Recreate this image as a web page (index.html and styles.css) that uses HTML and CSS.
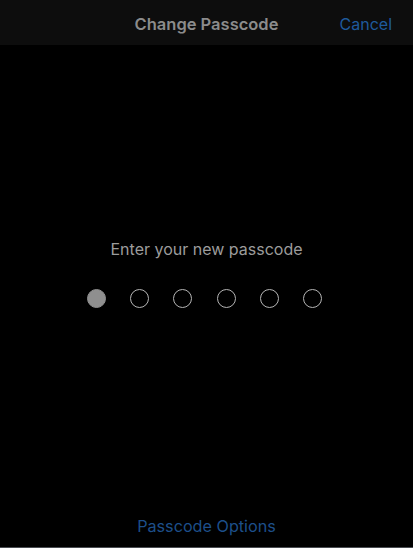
FILE: index.html
```html
<!DOCTYPE html>
<html lang="en">
<head>
  <meta charset="UTF-8">
  <title>Change Passcode</title>
  <link rel="stylesheet" href="styles.css">
</head>
<body>
  <div class="screen">
    <header class="nav-bar">
      <div class="nav-title">Change Passcode</div>
      <a class="nav-cancel" href="#">Cancel</a>
    </header>

    <main class="passcode">
      <div class="prompt">Enter your new passcode</div>
      <div class="dots">
        <span class="dot filled"></span>
        <span class="dot"></span>
        <span class="dot"></span>
        <span class="dot"></span>
        <span class="dot"></span>
        <span class="dot"></span>
      </div>
    </main>

    <footer class="options">
      <a class="options-link" href="#">Passcode Options</a>
    </footer>
  </div>
</body>
</html>
```

FILE: styles.css
```css
* { box-sizing: border-box; margin: 0; padding: 0; }
body {
  background: #000;
  font-family: Inter, "Liberation Sans", sans-serif;
}
a { text-decoration: none; }
.screen {
  display: flex;
  flex-direction: column;
  height: 548px;
  width: 413px;
  background: #000;
}
.nav-bar {
  position: relative;
  height: 45px;
  padding-top: 2px;
  background: #0d0d0d;
  display: flex;
  align-items: center;
  justify-content: center;
}
.nav-title {
  color: #8b8b8b;
  font-size: 16.5px;
  font-weight: 600;
}
.nav-cancel {
  position: absolute;
  right: 21px;
  top: 13px;
  color: #1f5a9c;
  font-size: 16px;
  line-height: 22px;
}
.passcode {
  flex: 1;
  display: flex;
  flex-direction: column;
  align-items: center;
  padding-top: 194px;
}
.prompt {
  color: #9c9c9c;
  font-size: 16px;
  line-height: 20px;
}
.dots {
  display: flex;
  gap: 24.4px;
  margin-top: 30px;
  margin-right: 4px;
}
.dot {
  width: 19px;
  height: 19px;
  border-radius: 50%;
  border: 1px solid #b5b5b5;
}
.dot.filled {
  background: #8f8f8f;
  border-color: #8f8f8f;
}
.options {
  display: flex;
  justify-content: center;
  padding-bottom: 11px;
  border-bottom: 1px solid #4a4d52;
}
.options-link {
  color: #1d4f8a;
  font-size: 16.2px;
  line-height: 20px;
}
```
